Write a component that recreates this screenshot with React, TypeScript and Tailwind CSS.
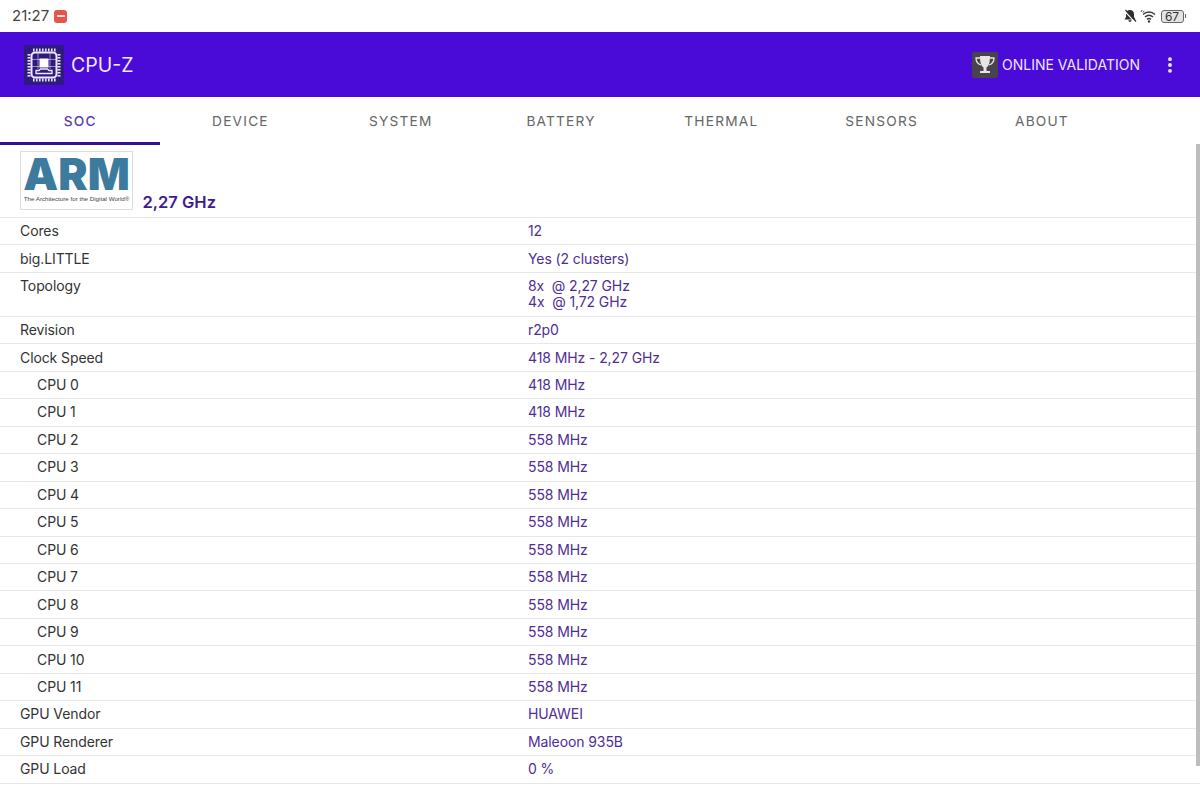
import { MoreVertical } from 'lucide-react'

const tabs = ['SOC', 'DEVICE', 'SYSTEM', 'BATTERY', 'THERMAL', 'SENSORS', 'ABOUT']

const rows: { label: string; value: string[]; indent?: boolean }[] = [
  { label: 'Cores', value: ['12'] },
  { label: 'big.LITTLE', value: ['Yes (2 clusters)'] },
  { label: 'Topology', value: ['8x  @ 2,27 GHz', '4x  @ 1,72 GHz'] },
  { label: 'Revision', value: ['r2p0'] },
  { label: 'Clock Speed', value: ['418 MHz - 2,27 GHz'] },
  { label: 'CPU 0', value: ['418 MHz'], indent: true },
  { label: 'CPU 1', value: ['418 MHz'], indent: true },
  { label: 'CPU 2', value: ['558 MHz'], indent: true },
  { label: 'CPU 3', value: ['558 MHz'], indent: true },
  { label: 'CPU 4', value: ['558 MHz'], indent: true },
  { label: 'CPU 5', value: ['558 MHz'], indent: true },
  { label: 'CPU 6', value: ['558 MHz'], indent: true },
  { label: 'CPU 7', value: ['558 MHz'], indent: true },
  { label: 'CPU 8', value: ['558 MHz'], indent: true },
  { label: 'CPU 9', value: ['558 MHz'], indent: true },
  { label: 'CPU 10', value: ['558 MHz'], indent: true },
  { label: 'CPU 11', value: ['558 MHz'], indent: true },
  { label: 'GPU Vendor', value: ['HUAWEI'] },
  { label: 'GPU Renderer', value: ['Maleoon 935B'] },
  { label: 'GPU Load', value: ['0 %'] },
]

function ChipIcon() {
  const pins = [0, 1, 2, 3, 4, 5, 6, 7]
  return (
    <div className="w-10 h-10 bg-[#2f1a80] flex items-center justify-center">
      <svg width="36" height="36" viewBox="0 0 36 36" fill="none">
        {pins.map((p) => (
          <g key={p} fill="#e9defc">
            <rect x={7 + p * 3} y="1.500" width="1.600" height="3" />
            <rect x={7 + p * 3} y="31.500" width="1.600" height="3" />
            <rect x="1.500" y={7 + p * 3} width="3" height="1.600" />
            <rect x="31.500" y={7 + p * 3} width="3" height="1.600" />
          </g>
        ))}
        <rect x="5.500" y="5.500" width="25" height="25" rx="3.500" stroke="#efe6ff" strokeWidth="2" />
        <path d="M6 12.500h24M6 19.500h24M12 6v16M24 6v16" stroke="#e9defc" strokeWidth="0.800" opacity="0.700" />
        <rect x="13.500" y="11.500" width="9" height="9" fill="#fff" />
        <path d="M10 26.500v-3h3l1.500-1.500h7l1.500 1.500h3v3z" stroke="#efe6ff" strokeWidth="1.300" />
      </svg>
    </div>
  )
}

function TrophyIcon() {
  return (
    <div className="w-[26px] h-[26px] bg-[#48444e] rounded-[2px] flex items-center justify-center">
      <svg width="24" height="24" viewBox="0 0 24 24" fill="none">
        <path d="M7 3h10c0 6-1 10-3.500 11.500V18H17v2H7v-2h3.500v-3.500C8 13 7 9 7 3z" fill="#e8e6e4" />
        <path d="M7 5H3c0 4 2 6 5 7M17 5h4c0 4-2 6-5 7" stroke="#e8e6e4" strokeWidth="1.300" />
      </svg>
    </div>
  )
}

function StatusIcons() {
  return (
    <div className="flex items-center gap-[3px]">
      <svg width="14" height="14" viewBox="0 0 14 14" fill="#2e2e2e">
        <path d="M7 1C4.400 1 3 3 3 5.200V8L1.500 10.500h11L11 8V5.200C11 3 9.600 1 7 1z" />
        <path d="M5.400 11.300h3.200a1.600 1.600 0 0 1-3.200 0z" />
        <path d="M1.500 2l10.500 11" stroke="#fff" strokeWidth="1.200" />
        <path d="M2.500 1l10.500 11.500" stroke="#2e2e2e" strokeWidth="1.200" />
      </svg>
      <svg width="18" height="14" viewBox="0 0 18 14" fill="none" stroke="#3a3a3a" strokeWidth="1.500">
        <path d="M3 5.500c3.500-3.300 8.500-3.300 12 0" />
        <path d="M5 8c2.400-2.200 5.600-2.200 8 0" />
        <path d="M7 10.300c1.200-1 2.800-1 4 0" />
        <circle cx="9" cy="12.500" r="1.200" fill="#3a3a3a" stroke="none" />
        <path d="M0.800 3L2.200 1M3 3.500L4.200 1.800" strokeWidth="0.900" />
      </svg>
      <div className="flex items-center">
        <div className="w-[23px] h-[13px] border border-[#666] rounded-[3px] bg-[#e4e4e4] text-[12px] leading-[11px] text-[#333] text-center">
          67
        </div>
        <div className="w-[1.500px] h-[4px] bg-[#666] ml-[1px]" />
      </div>
    </div>
  )
}

export default function App() {
  return (
    <div className="w-[1200px] h-[789px] overflow-hidden bg-white font-['Inter','Noto_Sans',sans-serif] relative">
      {/* status bar */}
      <div className="h-8 px-3 flex items-center justify-between">
        <div className="flex items-center gap-[5px]">
          <span className="text-[15px] text-[#444]">21:27</span>
          <div className="w-[13px] h-[13px] rounded-[3px] bg-[#e2574c] flex items-center justify-center">
            <div className="w-2 h-[1.500px] bg-[#fbd9d5]" />
          </div>
        </div>
        <div className="pr-[2px]">
          <StatusIcons />
        </div>
      </div>

      {/* app bar */}
      <div className="h-[65px] bg-[#4a0ad8] flex items-center justify-between pl-6 pr-5">
        <div className="flex items-center gap-[7px]">
          <ChipIcon />
          <span className="text-[19.500px] text-[#f3e9ff] pt-[2px]">CPU-Z</span>
        </div>
        <div className="flex items-center">
          <TrophyIcon />
          <span className="text-[14px] text-[#f0e6ff] ml-[4px] mr-5">ONLINE VALIDATION</span>
          <MoreVertical size={20} strokeWidth={2.6} className="text-[#f3e9ff]" />
        </div>
      </div>

      {/* tabs */}
      <div className="flex h-12">
        {tabs.map((t, i) => (
          <div
            key={t}
            className={
              i === 0
                ? 'w-[160.300px] flex items-center justify-center text-[13.700px] tracking-[1.200px] font-medium text-[#5b3fa8] border-b-[3px] border-[#31109a] pt-[3px]'
                : 'w-[160.300px] flex items-center justify-center text-[13.700px] tracking-[1.200px] text-[#666]'
            }
          >
            {t}
          </div>
        ))}
      </div>

      {/* scroll indicator */}
      <div className="absolute right-0 top-[144px] w-[4px] h-[622px] bg-[#bdbdbd]" />

      {/* header with logo */}
      <div className="h-[73px] pl-5 flex items-end border-b border-[#e8e8e8]">
        <div className="w-[113px] h-[59px] border border-[#ddd] flex flex-col items-center mb-[7px] shrink-0">
          <div className="text-[44px] leading-[36px] h-[36px] mt-[4px] font-black text-[#3c7a9e]">ARM</div>
          <div className="text-[6.200px] leading-[9px] mt-[2px] whitespace-nowrap text-[#444] font-['Liberation_Sans',sans-serif]">
            The Architecture for the Digital World®
          </div>
        </div>
        <span className="ml-[9.500px] mb-[2px] text-[16.500px] font-semibold text-[#3f1a92]">2,27 GHz</span>
      </div>

      {/* spec rows */}
      {rows.map((r) => (
        <div
          key={r.label}
          className={
            r.value.length > 1
              ? 'h-[44px] flex border-b border-[#e8e8e8] text-[14px] tracking-[-0.100px] pt-[5px] leading-[16px]'
              : 'h-[27.460px] flex items-center border-b border-[#e8e8e8] text-[14px] tracking-[-0.100px] leading-[16px]'
          }
        >
          <div className={r.indent ? 'w-[528px] pl-[37px] text-[#333]' : 'w-[528px] pl-5 text-[#333]'}>
            {r.label}
          </div>
          <div className="text-[#4f2d96] whitespace-pre">
            {r.value.map((v) => (
              <div key={v}>{v}</div>
            ))}
          </div>
        </div>
      ))}
    </div>
  )
}
